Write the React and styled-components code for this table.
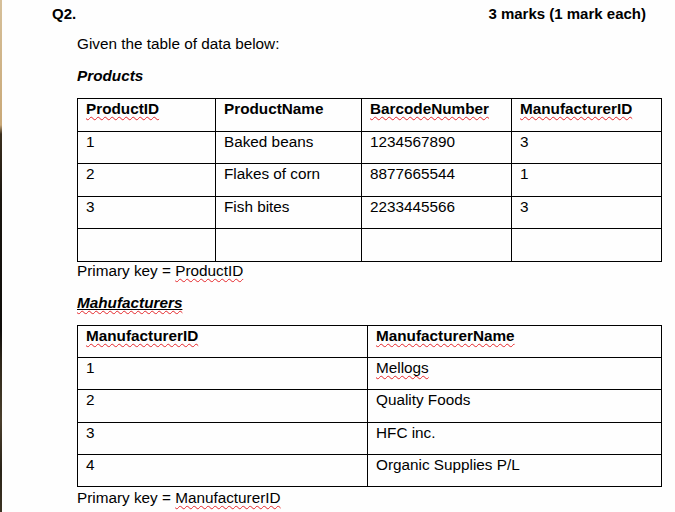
import React from "react";
import styled, { createGlobalStyle } from "styled-components";

const Global = createGlobalStyle`
  html, body { margin: 0; padding: 0; background: #fff; }
  body { font-family: "Liberation Sans", Arial, sans-serif; color: #000; }
`;

const Frame = styled.div`
  display: flex;
  width: 675px;
  height: 512px;
  overflow: hidden;
  background: #fefefe;
`;

const Strip = styled.div`
  flex: 0 0 2px;
  background: linear-gradient(
    to bottom,
    #d6c09a 0px,
    #c9a877 125px,
    #3b2f1e 134px,
    #19150f 200px,
    #0f0d0a 330px,
    #2d2619 360px,
    #4a3f2c 420px,
    #2a2418 470px,
    #3c3323 512px
  );
`;

const Page = styled.div`
  flex: 1;
  min-width: 0;
  padding: 5px 29px 0 50px;
  font-size: 15.3px;
  line-height: 17px;
`;

const Header = styled.div`
  display: flex;
  justify-content: space-between;
  font-weight: bold;
  font-size: 15px;
`;

const Body = styled.div`
  margin-left: 25px;
  display: flex;
  flex-direction: column;
`;

const Para = styled.div`
  margin-top: ${(p) => p.$mt || 0}px;
`;

const Heading = styled.div`
  margin-top: ${(p) => p.$mt || 0}px;
  font-weight: bold;
  font-style: italic;
`;

const Spell = styled.span`
  text-decoration-line: underline;
  text-decoration-style: wavy;
  text-decoration-color: #e5262a;
  text-decoration-thickness: 1px;
  text-underline-offset: 2px;
  text-decoration-skip-ink: none;
`;

const Under = styled.span`
  text-decoration: underline solid #000 1px;
  text-underline-offset: 1px;
`;

const Table = styled.table`
  border-collapse: collapse;
  table-layout: fixed;
  width: 585px;
  margin-top: ${(p) => p.$mt || 0}px;
`;

const Row = styled.tr`
  height: ${(p) => p.$h}px;
`;

const Cell = styled.td`
  border: 1px solid #000;
  padding: 1px 8px 0 8px;
  vertical-align: top;
  font-weight: ${(p) => (p.$head ? "bold" : "normal")};
  white-space: nowrap;
`;

const products = [
  ["1", "Baked beans", "1234567890", "3"],
  ["2", "Flakes of corn", "8877665544", "1"],
  ["3", "Fish bites", "2233445566", "3"],
  ["", "", "", ""],
];

const manufacturers = [
  ["1", <Spell>Mellogs</Spell>],
  ["2", "Quality Foods"],
  ["3", "HFC inc."],
  ["4", "Organic Supplies P/L"],
];

export default function App() {
  return (
    <>
      <Global />
      <Frame>
        <Strip />
        <Page>
          <Header>
            <span>Q2.</span>
            <span>3 marks (1 mark each)</span>
          </Header>
          <Body>
            <Para $mt={13}>Given the table of data below:</Para>
            <Heading $mt={15}>Products</Heading>
            <Table $mt={14}>
              <colgroup>
                <col style={{ width: 138 }} />
                <col style={{ width: 146 }} />
                <col style={{ width: 150 }} />
                <col style={{ width: 150 }} />
              </colgroup>
              <tbody>
                <Row $h={32.5}>
                  <Cell $head><Spell>ProductID</Spell></Cell>
                  <Cell $head>ProductName</Cell>
                  <Cell $head><Spell>BarcodeNumber</Spell></Cell>
                  <Cell $head><Spell>ManufacturerID</Spell></Cell>
                </Row>
                {products.map((r, i) => (
                  <Row $h={32.5} key={i}>
                    {r.map((c, j) => (
                      <Cell key={j}>{c}</Cell>
                    ))}
                  </Row>
                ))}
              </tbody>
            </Table>
            <Para $mt={0}>
              Primary key = <Spell>ProductID</Spell>
            </Para>
            <Heading $mt={15}>
              <Spell><Under>Mahufacturers</Under></Spell>
            </Heading>
            <Table $mt={14}>
              <colgroup>
                <col style={{ width: 290 }} />
                <col style={{ width: 294 }} />
              </colgroup>
              <tbody>
                <Row $h={32.4}>
                  <Cell $head><Spell>ManufacturerID</Spell></Cell>
                  <Cell $head><Spell>ManufacturerName</Spell></Cell>
                </Row>
                {manufacturers.map((r, i) => (
                  <Row $h={32.4} key={i}>
                    <Cell>{r[0]}</Cell>
                    <Cell>{r[1]}</Cell>
                  </Row>
                ))}
              </tbody>
            </Table>
            <Para $mt={2}>
              Primary key = <Spell>ManufacturerID</Spell>
            </Para>
          </Body>
        </Page>
      </Frame>
    </>
  );
}
